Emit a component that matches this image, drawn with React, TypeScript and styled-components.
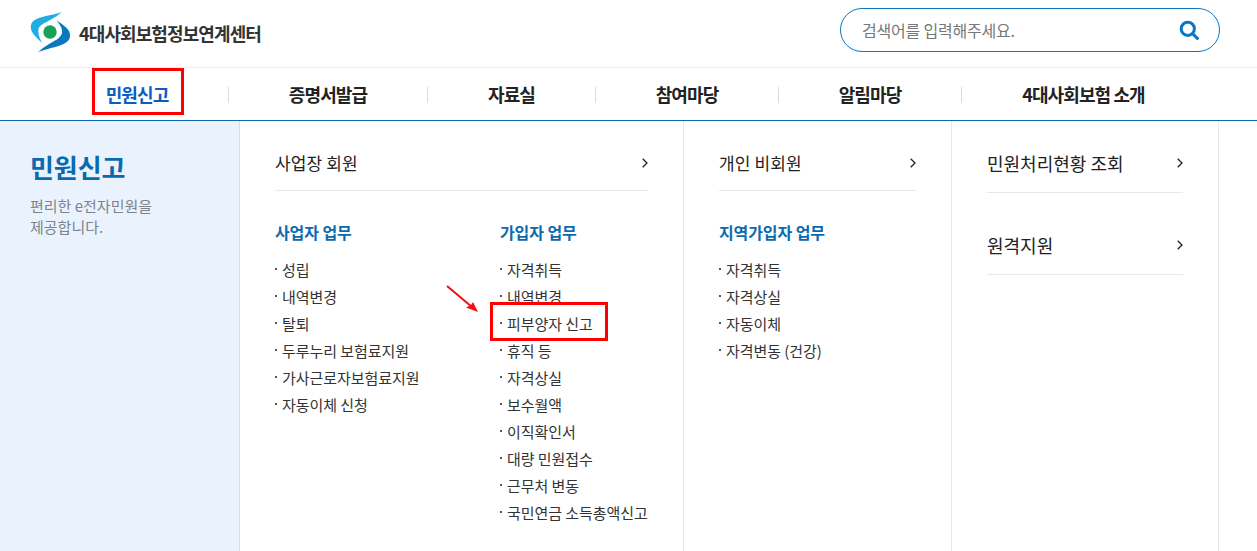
import React from 'react';
import styled, { createGlobalStyle } from 'styled-components';

const GlobalStyle = createGlobalStyle`
  html, body {
    margin: 0;
    padding: 0;
    background: #fff;
    overflow: hidden;
  }
  body {
    font-family: "Noto Sans CJK KR", "Noto Sans", sans-serif;
    color: #222;
  }
  * { box-sizing: border-box; }
`;

const navItems = [
  { label: '민원신고', width: 180 },
  { label: '증명서발급', width: 199 },
  { label: '자료실', width: 168 },
  { label: '참여마당', width: 183 },
  { label: '알림마당', width: 183 },
  { label: '4대사회보험 소개', width: 244 },
];

const bizWork = ['성립', '내역변경', '탈퇴', '두루누리 보험료지원', '가사근로자보험료지원', '자동이체 신청'];
const memberWork = ['자격취득', '내역변경', '피부양자 신고', '휴직 등', '자격상실', '보수월액', '이직확인서', '대량 민원접수', '근무처 변동', '국민연금 소득총액신고'];
const localWork = ['자격취득', '자격상실', '자동이체', '자격변동 (건강)'];

const Chevron = () => (
  <svg width="6" height="10" viewBox="0 0 6 10" fill="none">
    <path d="M.7.7 5 5 .7 9.3" stroke="#222" strokeWidth="1.3" />
  </svg>
);

const Logo = () => (
  <svg width="41" height="41" viewBox="0 0 41 41">
    <path d="M32 0C22 4 3 4 1 13c-1.500 7 5 12 11 18-2-4-4.500-9-3.500-14C10 11 22 9 32 0Z" fill="#1eaee4" />
    <path d="M8 40.500C18 35 38 35 40 25c1-8-6-11-13.500-17 2.500 4 6.500 8 5.500 13-2 8-14 9-24 19.500Z" fill="#0a78bd" />
    <circle cx="20" cy="20" r="6.700" fill="#17a25a" />
  </svg>
);

const SearchIcon = () => (
  <svg width="20" height="20" viewBox="0 0 20 20" fill="none">
    <circle cx="8.800" cy="8.800" r="6.600" stroke="#0a78c6" strokeWidth="3" />
    <path d="m13.600 13.600 4.800 4.800" stroke="#0a78c6" strokeWidth="3" strokeLinecap="round" />
  </svg>
);

const SubList = ({ items }: { items: string[] }) => (
  <List>
    {items.map((item) => (
      <ListItem key={item}>{item}</ListItem>
    ))}
  </List>
);

export default function App() {
  return (
    <Page>
      <GlobalStyle />
      <Header>
        <Brand>
          <Logo />
          <BrandName>4대사회보험정보연계센터</BrandName>
        </Brand>
        <SearchBox>
          <SearchText>검색어를 입력해주세요.</SearchText>
          <SearchIcon />
        </SearchBox>
      </Header>

      <Nav>
        {navItems.map((item, i) => (
          <NavItem key={item.label} $width={item.width} $active={i === 0} $last={i === navItems.length - 1}>
            {item.label}
          </NavItem>
        ))}
        <NavHighlight />
      </Nav>

      <Panel>
        <Side>
          <SideTitle>민원신고</SideTitle>
          <SideText>
            편리한 e전자민원을
            <br />
            제공합니다.
          </SideText>
        </Side>

        <BizColumn>
          <LinkRow>
            사업장 회원
            <Chevron />
          </LinkRow>
          <Groups>
            <Group $width={225}>
              <GroupTitle>사업자 업무</GroupTitle>
              <SubList items={bizWork} />
            </Group>
            <Group $width={150}>
              <GroupTitle>가입자 업무</GroupTitle>
              <SubList items={memberWork} />
            </Group>
          </Groups>
        </BizColumn>

        <PersonColumn>
          <LinkRow>
            개인 비회원
            <Chevron />
          </LinkRow>
          <Groups>
            <Group $width={197}>
              <GroupTitle>지역가입자 업무</GroupTitle>
              <SubList items={localWork} />
            </Group>
          </Groups>
        </PersonColumn>

        <ExtraColumn>
          <ExtraLink>
            민원처리현황 조회
            <Chevron />
          </ExtraLink>
          <ExtraLink>
            원격지원
            <Chevron />
          </ExtraLink>
        </ExtraColumn>

        <ItemHighlight />
        <Arrow width="36" height="32" viewBox="0 0 36 32">
          <path d="M1 1 26 22" stroke="#f01010" strokeWidth="2" />
          <path d="M32 27 20 22.500l3-1.500 2-1 1-1.500 1-1.500Z" fill="#f01010" />
        </Arrow>
      </Panel>
    </Page>
  );
}

const Page = styled.div`
  width: 1257px;
  height: 551px;
  overflow: hidden;
  background: #fff;
`;

const Header = styled.header`
  height: 68px;
  display: flex;
  align-items: flex-start;
  justify-content: space-between;
  padding: 8px 37px 0 30px;
  border-bottom: 1px solid #eeeeee;
`;

const Brand = styled.div`
  display: flex;
  align-items: center;
  gap: 8px;
  padding-top: 4px;
`;

const BrandName = styled.span`
  font-size: 18px;
  font-weight: 700;
  letter-spacing: -0.9px;
  color: #333;
  line-height: 26px;
`;

const SearchBox = styled.div`
  width: 380px;
  height: 44px;
  display: flex;
  align-items: center;
  justify-content: space-between;
  padding: 0 20px 0 21px;
  border: 1px solid #0a78c6;
  border-radius: 22px;
`;

const SearchText = styled.span`
  font-size: 16px;
  letter-spacing: -0.2px;
  color: #777;
`;

const Nav = styled.nav`
  position: relative;
  height: 53px;
  display: flex;
  padding-left: 49px;
  border-bottom: 1px solid #0a6aab;
`;

const NavItem = styled.div<{ $width: number; $active: boolean; $last: boolean }>`
  position: relative;
  width: ${({ $width }) => $width}px;
  display: flex;
  align-items: center;
  justify-content: center;
  padding-right: ${({ $active }) => ($active ? 4 : 1)}px;
  font-size: 18px;
  font-weight: 700;
  letter-spacing: -0.9px;
  color: ${({ $active }) => ($active ? '#0b5cc4' : '#222')};

  &::after {
    content: '';
    display: ${({ $last }) => ($last ? 'none' : 'block')};
    position: absolute;
    right: 0;
    top: 19px;
    width: 1px;
    height: 16px;
    background: #d5dce2;
  }
`;

const NavHighlight = styled.div`
  position: absolute;
  left: 92px;
  top: 0;
  width: 92px;
  height: 47px;
  border: 3px solid #ff0000;
`;

const Panel = styled.div`
  position: relative;
  height: 430px;
  display: flex;
`;

const Side = styled.aside`
  width: 240px;
  padding: 27px 0 0 30px;
  background: #eaf3fd;
  border-right: 1px solid #d8dde3;
`;

const SideTitle = styled.h2`
  margin: 0;
  font-size: 26px;
  line-height: 38px;
  font-weight: 700;
  letter-spacing: -0.1px;
  color: #0a6ab0;
`;

const SideText = styled.p`
  margin: 9px 0 0;
  font-size: 15px;
  line-height: 21px;
  color: #7b838c;
`;

const BizColumn = styled.section`
  width: 444px;
  padding: 18px 35px 0 35px;
  border-right: 1px solid #e8e8e8;
`;

const PersonColumn = styled.section`
  width: 268px;
  padding: 18px 35px 0 35px;
  border-right: 1px solid #e8e8e8;
`;

const ExtraColumn = styled.section`
  width: 267px;
  padding: 18px 35px 0 35px;
  border-right: 1px solid #e8e8e8;
`;

const LinkRow = styled.div`
  height: 52px;
  display: flex;
  align-items: center;
  justify-content: space-between;
  font-size: 17px;
  letter-spacing: 0.13px;
  color: #222;
  border-bottom: 1px solid #e8e8e8;
  padding-bottom: 4px;
  margin-bottom: 28px;
`;

const ExtraLink = styled(LinkRow)`
  height: 54px;
  font-size: 18px;
  letter-spacing: 0;
  padding-bottom: 6px;
`;

const Groups = styled.div`
  display: flex;
  padding-top: 1px;
`;

const Group = styled.div<{ $width: number }>`
  width: ${({ $width }) => $width}px;
  flex: none;
`;

const GroupTitle = styled.h3`
  margin: 0 0 12px;
  font-size: 16px;
  line-height: 24px;
  font-weight: 700;
  letter-spacing: -0.1px;
  color: #0a6ab0;
`;

const List = styled.ul`
  margin: 0;
  padding: 0;
  list-style: none;
`;

const ListItem = styled.li`
  height: 27px;
  line-height: 27px;
  font-size: 15px;
  letter-spacing: -0.05px;
  color: #333;
  white-space: nowrap;

  &::before {
    content: '';
    display: inline-block;
    width: 2px;
    height: 2px;
    margin-right: 5px;
    vertical-align: 6px;
    background: #555;
  }
`;

const ItemHighlight = styled.div`
  position: absolute;
  left: 490px;
  top: 181px;
  width: 118px;
  height: 39px;
  border: 3px solid #ff0000;
  pointer-events: none;
`;

const Arrow = styled.svg`
  position: absolute;
  left: 446px;
  top: 164px;
`;
